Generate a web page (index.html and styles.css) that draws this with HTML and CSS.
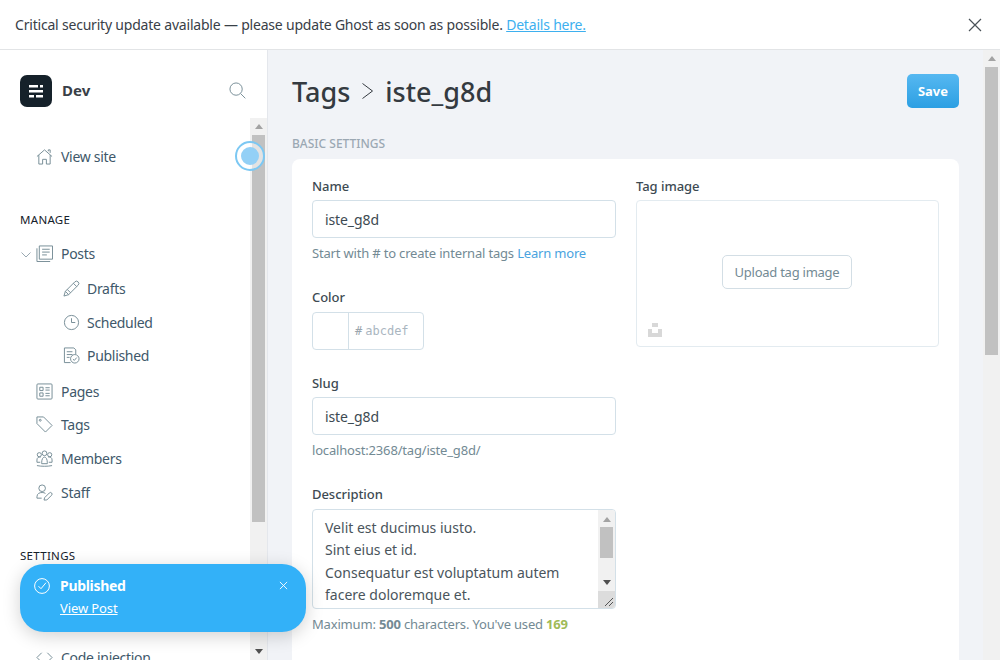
FILE: index.html
```html
<!DOCTYPE HTML>
<html>
  <head>
    <title>Tags - iste_g8d</title>
    <meta charset="utf-8" />
    <link rel="stylesheet" href="styles.css">
  </head>
  <body>
    <div class="alert">
      <p>Critical security update available — please update Ghost as soon as possible. <a href="#">Details here.</a></p>
      <svg class="alert-close" viewBox="0 0 14 14"><path d="M1 1l12 12M13 1L1 13"/></svg>
    </div>
    <div class="app">
      <aside class="side">
        <div class="brand">
          <svg class="logo" viewBox="0 0 32 32">
            <rect width="32" height="32" rx="7" fill="#15212a"/>
            <path d="M9 10h9v2.500H9zM20 10h3v2.500h-3zM9 15h14v2.500H9zM9 20h5v2.500H9zM16 20h7v2.500h-7z" fill="#fff"/>
          </svg>
          <b class="brand-name">Dev</b>
          <svg class="search" viewBox="0 0 18 18"><circle cx="7.500" cy="7.500" r="6.500"/><path d="M12.300 12.300l5 5"/></svg>
        </div>
        <div class="side-body">
          <nav class="nav">
            <a class="item first" href="#">
              <svg viewBox="0 0 18 18"><path d="M1 9l8-7 8 7M3 7.500V17h4v-5h4v5h4V7.500M13 3.500V2h2v3.200"/></svg>View site
            </a>
            <h4 class="nav-head">MANAGE</h4>
            <a class="item" href="#">
              <svg class="caret" viewBox="0 0 10 6"><path d="M.5.5L5 5 9.500.5"/></svg>
              <svg viewBox="0 0 18 18"><path d="M3.500 1h14v14h-14zM1 3.500V17.500h14M6.500 4.500h8M6.500 7.500h8M6.500 10.500h5"/></svg>Posts
            </a>
            <a class="item sub drafts" href="#">
              <svg viewBox="0 0 18 18"><path d="M1 17l1.500-5L12.500 2a2 2 0 0 1 3.500 3.500L6 15.500zM2.500 12L6 15.500M11 3.500L14.500 7M4.500 10L8 13.500"/></svg>Drafts
            </a>
            <a class="item sub" href="#">
              <svg viewBox="0 0 18 18"><circle cx="9" cy="9" r="7.500"/><path d="M9 4.500V9h4"/></svg>Scheduled
            </a>
            <a class="item sub" href="#">
              <svg viewBox="0 0 18 18"><path d="M8 16.500H1.500V1h10l2 2v4.500M4 5h6M4 8h6M4 11h3"/><circle cx="12.500" cy="12.500" r="4.500"/><path d="M10.500 12.800l1.500 1.400 2.500-3"/></svg>Published
            </a>
            <a class="item pages" href="#">
              <svg viewBox="0 0 18 18"><rect x="1" y="1" width="16" height="16" rx="1"/><path d="M4 4.500h3.500V8H4zM4 10.500h3.500V14H4zM10 5h4.500M10 7.500h4.500M10 11h4.500M10 13.500h4.500"/></svg>Pages
            </a>
            <a class="item" href="#">
              <svg viewBox="0 0 18 18"><path d="M1 1h7l9 9-7 7-9-9z"/><circle cx="4.500" cy="4.500" r="1"/></svg>Tags
            </a>
            <a class="item" href="#">
              <svg viewBox="0 0 18 18"><circle cx="9" cy="3.500" r="2.500"/><circle cx="3.500" cy="5" r="2.200"/><circle cx="14.500" cy="5" r="2.200"/><path d="M6 13.500c0-8 6-8 6 0v1H6zM4.500 13H1v-2.500c0-2.500 2-3.500 4-3M13.500 13H17v-2.500c0-2.500-2-3.500-4-3M1 16.500c5 1 11 1 16 0"/></svg>Members
            </a>
            <a class="item" href="#">
              <svg viewBox="0 0 18 18"><circle cx="6.500" cy="4.500" r="3.500"/><path d="M1 15v-1.500C1 10 4 9 6.500 9c1.500 0 2.500.3 3.500 1M1 15h5M8.500 17l.6-2.500 5-5a1.400 1.400 0 0 1 2.400 2.400l-5 5z"/></svg>Staff
            </a>
            <h4 class="nav-head second">SETTINGS</h4>
            <!-- two rows that the toast covers -->
            <div class="item"></div>
            <div class="item"></div>
            <a class="item" href="#">
              <svg viewBox="0 0 18 18"><path d="M6 4L1 9l5 5M12 4l5 5-5 5"/></svg>Code injection
            </a>
          </nav>
          <div class="bar">
            <i class="arrow up"></i>
            <div class="thumb side-thumb"></div>
            <i class="arrow down"></i>
          </div>
        </div>
        <span class="pulse"><span class="pulse-dot"></span></span>
      </aside>
      <main class="main">
        <div class="content">
          <header class="head">
            <h1 class="title">
              Tags
              <svg class="crumb" viewBox="0 0 11 16"><path d="M.5.5L10.500 8 .5 15.500"/></svg>
              iste_g8d
            </h1>
            <button class="save">Save</button>
          </header>
          <h5 class="section">BASIC SETTINGS</h5>
          <div class="card">
            <div class="col">
              <label class="label">Name</label>
              <div class="input">iste_g8d</div>
              <p class="hint">Start with # to create internal tags <a href="#">Learn more</a></p>
              <label class="label color-label">Color</label>
              <div class="color">
                <span class="swatch"></span>
                <span class="hex"><i>#</i>abcdef</span>
              </div>
              <label class="label slug-label">Slug</label>
              <div class="input">iste_g8d</div>
              <p class="hint">localhost:2368/tag/iste_g8d/</p>
              <label class="label desc-label">Description</label>
              <div class="area">
                <div class="area-text">Velit est ducimus iusto.<br>Sint eius et id.<br>Consequatur est voluptatum autem<br>facere doloremque et.</div>
                <div class="bar area-bar">
                  <i class="arrow up"></i>
                  <div class="thumb area-thumb"></div>
                  <i class="arrow down"></i>
                  <div class="grip">
                    <svg viewBox="0 0 10 10"><path d="M1 9l8-8M5 9l4-4"/></svg>
                  </div>
                </div>
              </div>
              <p class="hint count">Maximum: <b>500</b> characters. You've used <b class="used">169</b></p>
            </div>
            <div class="col">
              <label class="label">Tag image</label>
              <div class="upload">
                <button class="upload-btn">Upload tag image</button>
                <svg class="unsplash" viewBox="0 0 14 14"><path d="M4 0h6v4H4zM0 6h4v4h6V6h4v8H0z"/></svg>
              </div>
            </div>
          </div>
        </div>
        <div class="bar">
          <i class="arrow up"></i>
          <div class="thumb page-thumb"></div>
        </div>
      </main>
    </div>
    <div class="toast">
      <svg class="toast-icon" viewBox="0 0 16 16"><circle cx="8" cy="8" r="7.400"/><path d="M4.500 8.200l2.500 2.500 5-6"/></svg>
      <div class="toast-body">
        <b>Published</b>
        <a href="#">View Post</a>
      </div>
      <svg class="toast-close" viewBox="0 0 10 10"><path d="M1 1l8 8M9 1L1 9"/></svg>
    </div>
  </body>
</html>
```
FILE: styles.css
```css
*{
  margin:0;
  padding:0;
  box-sizing:border-box;
}
html,body{
  height:660px;
  overflow:hidden;
}
body{
  font-family:"Noto Sans","Open Sans",sans-serif;
  font-size:14px;
  color:#394047;
  background:#fff;
}
a{
  text-decoration:none;
}
svg{
  fill:none;
  stroke:#738a94;
  stroke-width:1;
}

/* top banner */
.alert{
  height:50px;
  display:flex;
  align-items:center;
  justify-content:space-between;
  padding:0 18px 0 15px;
  border-bottom:1px solid #e2e4e6;
  letter-spacing:-.2px;
}
.alert a{
  color:#3eb0ef;
  text-decoration:underline;
}
.alert-close{
  width:14px;
  height:14px;
  stroke:#4a5258;
  stroke-width:1.2;
}

.app{
  display:flex;
  height:610px;
}

/* sidebar */
.side{
  position:relative;
  width:268px;
  flex:none;
  display:flex;
  flex-direction:column;
  border-right:1px solid #e4e7ec;
}
.brand{
  height:68px;
  flex:none;
  display:flex;
  align-items:center;
  padding:13px 21px 0 20px;
  gap:10px;
}
.logo{
  width:32px;
  height:32px;
  stroke:none;
}
.brand-name{
  font-size:15px;
  flex:1;
  margin-bottom:2px;
}
.search{
  width:17px;
  height:17px;
}
.side-body{
  flex:1;
  min-height:0;
  display:flex;
}
.nav{
  flex:1;
  overflow:hidden;
  padding-left:20px;
}
.nav-head{
  font-size:11.500px;
  font-weight:400;
  letter-spacing:.3px;
  line-height:16px;
  color:#15212a;
  margin:39px 0 9px;
}
.nav-head.second{
  margin-top:40px;
}
.item{
  display:flex;
  align-items:center;
  height:33.600px;
  padding:1px 0 0 16px;
  position:relative;
  color:#40586a;
  gap:8px;
  letter-spacing:-.3px;
}
.item svg{
  width:17px;
  height:17px;
  flex:none;
}
.item.first{
  margin-top:21px;
}
.item .caret{
  position:absolute;
  left:1px;
  top:15px;
  width:10px;
  height:6px;
  stroke:#9aa9b2;
}
.item.sub{
  padding-left:43px;
  gap:7px;
}
.item.drafts{
  margin-top:1px;
}
.item.pages{
  margin-top:2px;
}

/* drawn scrollbars */
.bar{
  width:17px;
  flex:none;
  background:#f1f1f1;
  display:flex;
  flex-direction:column;
  align-items:center;
}
.arrow{
  display:block;
  flex:none;
  width:0;
  height:0;
  border-left:4px solid transparent;
  border-right:4px solid transparent;
}
.arrow.up{
  margin:6px 0;
  border-bottom:5px solid #a3a3a3;
}
.arrow.down{
  margin:auto 0 6px;
  border-top:5px solid #505050;
}
.thumb{
  width:13px;
  flex:none;
  background:#c1c1c1;
}
.side-thumb{
  height:387px;
}
.page-thumb{
  height:288px;
}

/* the dot that sits over the scrollbar */
.pulse{
  position:absolute;
  left:235px;
  top:91px;
  width:30px;
  height:30px;
  border-radius:50%;
  border:2px solid #7cc8f3;
  background:rgba(255,255,255,.55);
  display:flex;
  align-items:center;
  justify-content:center;
}
.pulse-dot{
  width:18px;
  height:18px;
  border-radius:50%;
  background:#93d0f6;
}

/* main column */
.main{
  flex:1;
  min-width:0;
  display:flex;
  background:#f1f3f7;
}
.content{
  flex:1;
  min-width:0;
  overflow:hidden;
  padding:24px 24px 0;
}
.head{
  display:flex;
  justify-content:space-between;
  align-items:center;
  height:34px;
}
.title{
  font-size:27px;
  font-weight:500;
  color:#343a40;
  display:flex;
  align-items:center;
  gap:12px;
}
.crumb{
  width:11px;
  height:16px;
  stroke:#343a40;
}
.save{
  width:52px;
  height:34px;
  border:0;
  border-radius:5px;
  background:linear-gradient(#56b8f1,#2c9fe3);
  color:#fff;
  font:700 13px "Noto Sans",sans-serif;
}
.section{
  font-size:12px;
  font-weight:500;
  color:#9ba8b3;
  line-height:16px;
  margin:28px 0 7px;
}
.card{
  background:#fff;
  border-radius:8px;
  padding:20px;
  display:grid;
  grid-template-columns:304px 303px;
  gap:20px;
  height:560px;
}
.label{
  display:block;
  font-size:13px;
  font-weight:500;
  line-height:14px;
  color:#3d4a52;
  margin-bottom:7px;
  letter-spacing:-.05px;
}
.input{
  height:38px;
  border:1px solid #d3e0e8;
  border-radius:4px;
  padding:0 12px;
  line-height:37px;
  color:#3d4a52;
  letter-spacing:-.1px;
}
.hint{
  font-size:13px;
  line-height:16px;
  color:#738a94;
  margin-top:7px;
  letter-spacing:-.18px;
}
.hint a{
  color:#4aa3e0;
}
.color-label{
  margin-top:29px;
  margin-bottom:8px;
}
.color{
  width:112px;
  height:38px;
  display:flex;
  border:1px solid #d3e0e8;
  border-radius:4px;
}
.swatch{
  width:36px;
  border-right:1px solid #d3e0e8;
}
.hex{
  padding-left:6px;
  font:12px/36px "DejaVu Sans Mono","Liberation Mono",monospace;
  color:#aab6bf;
}
.hex i{
  font-style:normal;
  color:#9aa5ad;
  margin-right:3px;
}
.slug-label{
  margin-top:26px;
}
.desc-label{
  margin-top:29px;
  margin-bottom:8px;
}
.area{
  height:100px;
  display:flex;
  border:1px solid #d3e0e8;
  border-radius:4px;
  overflow:hidden;
}
.area-text{
  flex:1;
  padding:7px 12px;
  line-height:22.400px;
  color:#4a555c;
}
.area-bar{
  position:relative;
}
.area-bar .arrow.up{
  margin:7px 0 5px;
}
.area-bar .arrow.down{
  margin:22px 0 0;
}
.area-thumb{
  height:31px;
}
.grip{
  position:absolute;
  right:0;
  bottom:0;
  width:17px;
  height:17px;
  background:#dcdcdc;
}
.grip svg{
  position:absolute;
  right:1px;
  bottom:1px;
  width:10px;
  height:10px;
  stroke:#555;
}
.used{
  color:#9fbb58;
}
.upload{
  position:relative;
  height:147px;
  border:1px solid #e3ebf0;
  border-radius:4px;
  display:flex;
  align-items:center;
  justify-content:center;
}
.upload-btn{
  width:130px;
  height:34px;
  margin:0 1px 3px 0;
  background:#fff;
  border:1px solid #d3dee5;
  border-radius:5px;
  color:#738a94;
  font:13px "Noto Sans",sans-serif;
  letter-spacing:-.25px;
}
.unsplash{
  position:absolute;
  left:11px;
  bottom:9px;
  width:14px;
  height:14px;
  fill:#d8d8d8;
  stroke:none;
}

/* toast */
.toast{
  position:absolute;
  left:20px;
  top:564px;
  width:286px;
  height:68px;
  padding:12px 18px 0 14px;
  border-radius:24px;
  background:#33b1f8;
  color:#fff;
  display:flex;
  align-items:flex-start;
  gap:10px;
  box-shadow:0 4px 18px rgba(0,0,0,.18);
}
.toast svg{
  stroke:#fff;
}
.toast-icon{
  width:16px;
  height:16px;
  flex:none;
  margin-top:2px;
}
.toast-body{
  flex:1;
  display:flex;
  flex-direction:column;
  gap:4px;
  line-height:19px;
  letter-spacing:-.3px;
}
.toast-body a{
  color:#fff;
  font-size:13px;
  letter-spacing:-.1px;
  text-decoration:underline;
}
.toast-close{
  width:9px;
  height:9px;
  margin-top:5px;
  flex:none;
}
```
